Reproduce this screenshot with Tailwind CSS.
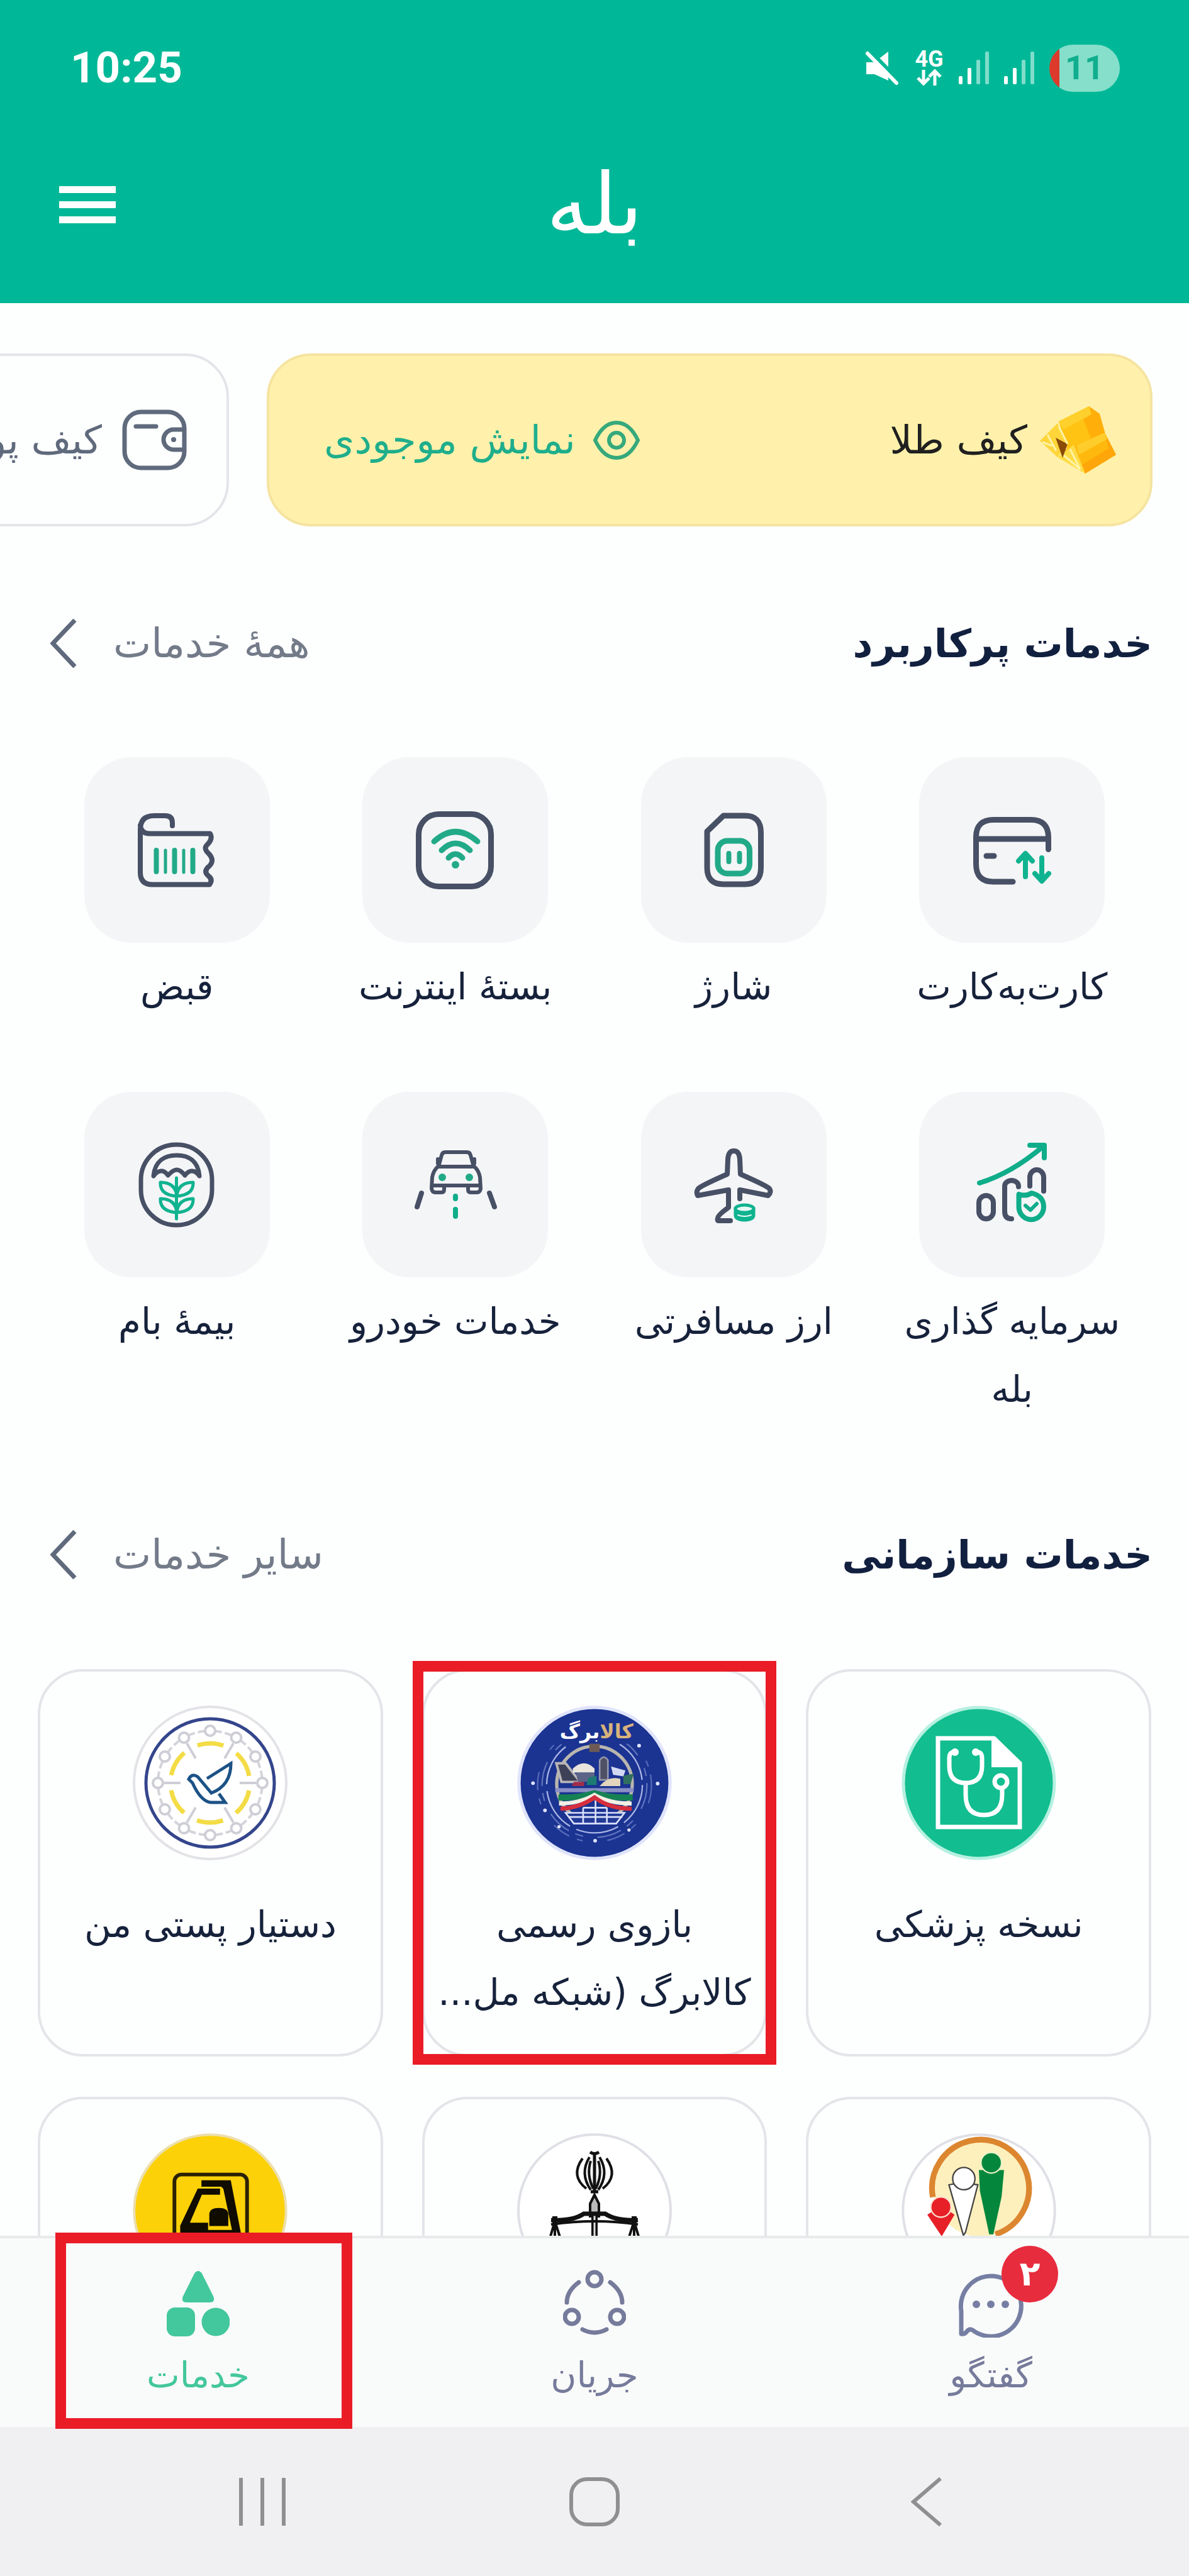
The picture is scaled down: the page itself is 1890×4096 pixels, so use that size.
<!DOCTYPE html>
<html lang="fa" dir="rtl">
<head>
    <meta charset="UTF-8">
    <meta name="viewport" content="width=device-width, initial-scale=1.0">
    <title>بله - خدمات</title>
    <script src="https://cdn.jsdelivr.net/npm/@tailwindcss/browser@4"></script>
</head>
<body class="flex h-screen flex-col overflow-hidden bg-[#fdfefe] font-['DejaVu_Sans',sans-serif] text-[#16223b]">

    <header class="flex h-[482px] shrink-0 flex-col bg-[#00b897] text-white" dir="ltr">
        <!-- status bar -->
        <div class="flex h-[216px] items-center justify-between pl-[112px] pr-[110px]">
            <span class="font-['Roboto',sans-serif] text-[69px] font-bold">10:25</span>
            <div class="flex items-center gap-[24px]">
                <svg class="h-[56px] w-[56px]" viewBox="0 0 56 56" fill="#fff">
                    <path d="M3 19h13L38 2v46L16 38H3z"/>
                    <path d="M9 1l47 48" stroke="#00b897" stroke-width="6"/>
                    <path d="M5 5l46 47" stroke="#fff" stroke-width="6" stroke-linecap="round"/>
                </svg>
                <div class="flex w-[46px] flex-col items-center">
                    <span class="font-['Roboto',sans-serif] text-[36px] font-bold leading-[30px]">4G</span>
                    <svg class="h-[28px] w-[44px]" viewBox="0 0 44 28" fill="none" stroke="#fff" stroke-width="5">
                        <path d="M13 2v22M4 15l9 9 9-9M31 27V4M22 13l9-9 9 9"/>
                    </svg>
                </div>
                <svg class="h-[52px] w-[48px]" viewBox="0 0 48 52" fill="#fff">
                    <rect x="0" y="39" width="6" height="13" rx="2"/><rect x="14" y="26" width="6" height="26" rx="2"/>
                    <rect x="28" y="13" width="6" height="39" rx="2" opacity=".5"/><rect x="42" y="0" width="6" height="52" rx="2" opacity=".5"/>
                </svg>
                <svg class="h-[52px] w-[48px]" viewBox="0 0 48 52" fill="#fff">
                    <rect x="0" y="39" width="6" height="13" rx="2"/><rect x="14" y="26" width="6" height="26" rx="2"/>
                    <rect x="28" y="13" width="6" height="39" rx="2" opacity=".5"/><rect x="42" y="0" width="6" height="52" rx="2" opacity=".5"/>
                </svg>
                <div class="flex h-[75px] w-[112px] items-center justify-center overflow-hidden rounded-full bg-linear-to-r from-[#dc3a2c] from-[16px] to-[#85dfca] to-[16px]">
                    <span class="font-['Roboto',sans-serif] text-[54px] font-bold leading-none text-[#0fae8f]">11</span>
                </div>
            </div>
        </div>
        <!-- app bar -->
        <div class="grid h-[218px] grid-cols-3 items-center px-[94px]">
            <button class="flex w-[90px] flex-col gap-[13px]" aria-label="منو">
                <span class="h-[11px] w-full bg-white"></span>
                <span class="h-[11px] w-full bg-white"></span>
                <span class="h-[11px] w-full bg-white"></span>
            </button>
            <h1 class="text-center text-[134px] font-normal leading-none">بله</h1>
        </div>
    </header>

    <main class="min-h-0 flex-1 overflow-hidden pt-[80px]">

        <!-- wallets -->
        <section class="flex gap-[60px] pr-[58px]">
            <div class="flex h-[275px] w-[1408px] shrink-0 items-center justify-between rounded-[70px] border-4 border-[#f5e4a0] bg-[#fff1ab] pl-[87px] pr-[54px]">
                <div class="flex items-center gap-[20px]">
                    <svg class="h-[108px] w-[121px]" viewBox="0 0 121 108">
                        <path d="M30 24L78 0l25 42-58 32z" fill="#ffc313"/>
                        <path d="M78 0l17 12 9 32-22 10-14-36z" fill="#ffae0a"/>
                        <path d="M30 24L78 0l4 13-45 24z" fill="#ffd02c"/>
                        <path d="M37 70l66-28 18 35-49 30z" fill="#ffb90e"/>
                        <path d="M103 42l18 35-49 30-5-14 42-26z" fill="#ffa60a"/>
                        <path d="M58 62l45-20 4 10-45 25z" fill="#ffcd2b"/>
                        <path d="M0 55l28-28 16 34-16 20z" fill="#ffd53a"/>
                        <path d="M28 81l26-20 18 46z" fill="#ffdb45"/>
                        <path d="M25 50l19 10-8 22z" fill="#8a4a08"/>
                        <path d="M4 57l16 6M12 45l14 26M30 32l14 28M38 78l26 22M48 68l16 32" stroke="#fff3a6" stroke-width="3"/>
                    </svg>
                    <span class="text-[62px] text-[#202020]">کیف طلا</span>
                </div>
                <button class="flex items-center gap-[28px] text-[62px] text-[#1fae8c]">
                    <svg class="h-[62px] w-[74px]" viewBox="0 0 74 62" fill="none" stroke="#35a97c" stroke-width="6">
                        <path d="M3 31C12 12 24 3 37 3s25 9 34 28C62 50 50 59 37 59S12 50 3 31z"/>
                        <circle cx="37" cy="31" r="12"/>
                    </svg>
                    نمایش موجودی
                </button>
            </div>
            <div class="flex h-[275px] w-[1408px] shrink-0 items-center gap-[32px] rounded-[70px] border-4 border-[#e3e5e9] pr-[63px]">
                <svg class="h-[97px] w-[103px] shrink-0" viewBox="0 0 103 97" fill="none" stroke="#5f6a7c" stroke-width="7">
                    <rect x="4" y="4" width="95" height="89" rx="26"/>
                    <path d="M22 27h32" stroke-linecap="round"/>
                    <path d="M99 32H82a16 16 0 0 0 0 32h17"/>
                    <circle cx="82" cy="48" r="4" fill="#5f6a7c" stroke="none"/>
                </svg>
                <span class="text-[62px] text-[#5f6a7c]">کیف پول</span>
            </div>
        </section>

        <!-- frequently used -->
        <section>
            <div class="mt-[132px] flex h-[108px] items-center justify-between pl-[80px] pr-[58px]">
                <h2 class="text-[62px] font-bold text-[#12203f]">خدمات پرکاربرد</h2>
                <a href="#" class="flex items-center gap-[58px] text-[64px] text-[#737b89]">
                    همهٔ خدمات
                    <svg class="h-[78px] w-[42px]" viewBox="0 0 42 78" fill="none" stroke="#5f6a7c" stroke-width="7"><path d="M39 2L4 39l35 37"/></svg>
                </a>
            </div>
            <div class="mt-[127px] grid grid-cols-4 gap-y-[113px] px-[60px] text-center text-[58px] leading-[108px]">
                <a href="#" class="flex flex-col items-center gap-4">
                    <svg class="size-[295px] rounded-[75px] bg-[#f4f5f7]" viewBox="0 0 295 295" fill="none" stroke="#475065" stroke-width="9" stroke-linecap="round" stroke-linejoin="round">
                        <path d="M149 198h-31q-27.500 0-27.500-28v-43q0-27.500 28-27.500h59q28 0 28 28v19M92 130h112"/>
                        <path d="M107 157h12"/>
                        <path d="M169 190v-36m-11 11l11-12 11 12M195 160v36m-11-11l11 12 11-12" stroke="#10b38f" stroke-width="8"/>
                    </svg>
                    کارت‌به‌کارت
                </a>
                <a href="#" class="flex flex-col items-center gap-4">
                    <svg class="size-[295px] rounded-[75px] bg-[#f4f5f7]" viewBox="0 0 295 295" fill="none" stroke="#475065" stroke-width="9" stroke-linecap="round" stroke-linejoin="round">
                        <path d="M131 93h34q25.500 0 25.500 27v56q0 26-25.500 26h-34q-26 0-26-26v-58z"/>
                        <rect x="122" y="133" width="50.500" height="52" rx="15" stroke="#22aa88"/>
                        <path d="M139.500 153v13M156.500 153v13" stroke="#22aa88" stroke-width="8"/>
                    </svg>
                    شارژ
                </a>
                <a href="#" class="flex flex-col items-center gap-4">
                    <svg class="size-[295px] rounded-[75px] bg-[#f4f5f7]" viewBox="0 0 295 295" fill="none" stroke="#475065" stroke-width="9" stroke-linecap="round">
                        <rect x="89.500" y="90.500" width="115" height="115" rx="32"/>
                        <g stroke="#22aa88">
                            <path d="M114 134q34-31 69 0M126 148q22-22 45 0M137 160q11-12 22 0"/>
                            <circle cx="148" cy="171" r="6" fill="#22aa88" stroke="none"/>
                        </g>
                    </svg>
                    بستهٔ اینترنت
                </a>
                <a href="#" class="flex flex-col items-center gap-4">
                    <svg class="size-[295px] rounded-[75px] bg-[#f4f5f7]" viewBox="0 0 295 295" fill="none" stroke="#475065" stroke-width="8" stroke-linecap="round" stroke-linejoin="round">
                        <path d="M140 109v-5q0-11-12-11h-17q-22 0-22 22v68q0 19.500 19 19.500h91q6-8-2-14-7-6-1-13 13-10 2-22-9-8-3-14 10-10 5-18H104q-14 0-15-13"/>
                        <g stroke="#22aa88">
                            <path d="M114.500 148v34M143.500 148v34M172.500 148v34"/>
                            <path d="M129 148v35M158 148v35" stroke-width="5"/>
                        </g>
                    </svg>
                    قبض
                </a>
                <a href="#" class="flex flex-col items-center gap-4">
                    <svg class="size-[295px] rounded-[75px] bg-[#f4f5f7]" viewBox="0 0 295 295" fill="none" stroke="#475065" stroke-width="8" stroke-linecap="round" stroke-linejoin="round">
                        <rect x="95" y="165" width="23" height="37" rx="11.500"/>
                        <path d="M158 151v-1a11 9 0 0 0-22 0v40q0 12 11 12M176 150v-14a11 12 0 0 1 22 0v22"/>
                        <g stroke="#10ad8a">
                            <path d="M96 145q50-15 101-58M176 85h23v20"/>
                            <path d="M158.500 163v20a19.500 20 0 0 0 39.500 0q0-17-19-22-10 6-20.500 2z"/>
                            <path d="M169 181l8 7 10-10" stroke-width="6"/>
                        </g>
                    </svg>
                    <span>سرمایه گذاری<br>بله</span>
                </a>
                <a href="#" class="flex flex-col items-center gap-4">
                    <svg class="size-[295px] rounded-[75px] bg-[#f4f5f7]" viewBox="0 0 295 295" fill="none" stroke="#475065" stroke-width="8" stroke-linecap="round" stroke-linejoin="round">
                        <path d="M157 170v-14l45 9q6-6 2-11-3-4-46-23l-1-24q-1-13-9.500-13t-9.500 13l-1 24q-43 19-46 23-4 5-1 11l49-9v28q-17 12-17 17-1 4 1 4h19"/>
                        <g stroke="#10b38f" stroke-width="5">
                            <path d="M150 185v12q1 7 14.500 7t14.500-7v-12" fill="#10b38f"/>
                            <ellipse cx="164.500" cy="186" rx="14.500" ry="6" fill="#e6faf5"/>
                            <path d="M154 196q10 4 21 0" stroke="#e6faf5" stroke-width="2"/>
                        </g>
                    </svg>
                    ارز مسافرتی
                </a>
                <a href="#" class="flex flex-col items-center gap-4">
                    <svg class="size-[295px] rounded-[75px] bg-[#f4f5f7]" viewBox="0 0 295 295" fill="none" stroke="#475065" stroke-width="6" stroke-linecap="round" stroke-linejoin="round">
                        <path d="M121 119l5-18q1-5 6-5h34q5 0 6 5l5 18M120 119h58q7 6 9 17l1 18q-1 6-6 6h-10q-4 0-4-5v-6h-38v6q0 5-4 5h-10q-5 0-6-6l1-18q2-11 9-17zM112 149h74M120 107v7M178 107v7"/>
                        <path d="M94 161l-7 22M202 161l8 22" stroke-width="8"/>
                        <path d="M148 166v4M148 187v11" stroke="#10ad8a" stroke-width="8"/>
                        <circle cx="127" cy="136" r="6" fill="#22aa88" stroke="none"/><circle cx="170" cy="136" r="6" fill="#22aa88" stroke="none"/>
                    </svg>
                    خدمات خودرو
                </a>
                <a href="#" class="flex flex-col items-center gap-4">
                    <svg class="size-[295px] rounded-[75px] bg-[#f4f5f7]" viewBox="0 0 295 295" fill="none" stroke="#475065" stroke-width="7" stroke-linecap="round" stroke-linejoin="round">
                        <rect x="90" y="84" width="113" height="128" rx="56"/>
                        <path d="M110 134c2-24 18-33 37-33s34 9 36 33q-6-9-13-8-6 1-10 7-7-9-13-9t-14 9q-4-6-9-7-8-1-14 8z"/>
                        <g stroke="#10b38f" stroke-width="5">
                            <path d="M146.500 137v65"/>
                            <path d="M147 166q-27-2-26-22 24 0 26 22zM147 166q27-2 26-22-24 0-26 22zM147 192q-27-2-26-22 24 0 26 22zM147 192q27-2 26-22-24 0-26 22z"/>
                        </g>
                    </svg>
                    بیمهٔ بام
                </a>
            </div>
        </section>

        <!-- organisations -->
        <section>
            <div class="mt-[155px] flex h-[108px] items-center justify-between pl-[80px] pr-[58px]">
                <h2 class="text-[62px] font-bold text-[#12203f]">خدمات سازمانی</h2>
                <a href="#" class="flex items-center gap-[58px] text-[64px] text-[#737b89]">
                    سایر خدمات
                    <svg class="h-[78px] w-[42px]" viewBox="0 0 42 78" fill="none" stroke="#5f6a7c" stroke-width="7"><path d="M39 2L4 39l35 37"/></svg>
                </a>
            </div>
            <div class="mt-[128px] grid grid-cols-3 gap-x-[62px] gap-y-[64px] px-[60px] text-center text-[58px] leading-[108px]">
                <a href="#" class="flex h-[616px] flex-col items-center gap-12 rounded-[72px] border-4 border-[#e3e5e9] pt-[54px]">
                    <svg class="size-[246px]" viewBox="0 0 246 246" fill="none" stroke="#fff" stroke-width="7">
                        <circle cx="123" cy="123" r="120" fill="#12bd90" stroke="#b5f0e0" stroke-width="5"/>
                        <path d="M146 52H58v141h130V92z"/>
                        <path d="M143 49v49h48v-8l-42-41z" fill="#fff" stroke="none"/>
                        <path d="M86 74q-10-2-10 10v12q0 27 26 27t26-27V84q0-12-10-10M102 123v19q0 32 29 32t29-32v-10"/>
                        <circle cx="85" cy="74" r="6" fill="#fff" stroke="none"/><circle cx="118" cy="74" r="6" fill="#fff" stroke="none"/>
                        <circle cx="158" cy="121" r="10"/>
                    </svg>
                    نسخه پزشکی
                </a>
                <a href="#" class="relative flex h-[616px] flex-col items-center gap-12 rounded-[72px] border-4 border-[#e3e5e9] pt-[54px]">
                    <svg class="size-[246px]" viewBox="25 20 750 750" fill="none">
                        <circle cx="400" cy="395" r="366" fill="#1b3391" stroke="#dfe4fb" stroke-width="16"/>
                        <g stroke="#7d8fd2" stroke-width="7">
                            <circle cx="400" cy="405" r="232" stroke="#a9b5e6" stroke-dasharray="210 34"/>
                            <circle cx="400" cy="405" r="254" stroke-dasharray="120 70 40 34" opacity=".7"/>
                            <circle cx="400" cy="405" r="276" stroke-dasharray="90 120 30 40" opacity=".6"/>
                        </g>
                        <path d="M220 90h370v115H220z" fill="#1b3391"/>
                        <circle cx="400" cy="400" r="183" stroke="#b9b6ae" stroke-width="16"/>
                        <path d="M375 205h50v40h-50z" fill="#6d5a55"/>
                        <path d="M215 300h45l70 90h-90z" stroke="#b8b5b8" stroke-width="12" fill="#3d4157"/>
                        <path d="M295 325q55-50 105 0v20H295z" fill="#e9e4dc"/>
                        <path d="M310 345h90v45h-80z" fill="#5c6487"/>
                        <path d="M425 285q20-30 40 0v95h-40z" fill="#4e5066" stroke="#9698ac" stroke-width="8"/>
                        <path d="M425 410q40-50 100-35v35z" fill="#e3d5bd"/>
                        <path d="M480 315l70 20-10 28-50-8z" fill="#d2d8f2"/>
                        <path d="M540 360l50-10-15 50h-35z" fill="#31705e"/>
                        <path d="M300 390h50v20h-60z" fill="#a02f4c"/><path d="M370 370l40-10v45h-50z" fill="#1e7b74"/>
                        <path d="M210 430h380" stroke="#8a90c4" stroke-width="20"/>
                        <path d="M260 540h285l-40 52H300z" fill="#223a97" stroke="#dbe1fa" stroke-width="8"/>
                        <path d="M345 590v-75M405 590V470M460 590v-75M345 515h115M275 560h260" stroke="#dbe1fa" stroke-width="8"/>
                        <path d="M225 465q90 5 175-20 85 25 185 20" stroke="#168253" stroke-width="30"/>
                        <path d="M228 495q100 0 172-42 72 42 180 42" stroke="#f2efe4" stroke-width="20"/>
                        <path d="M235 520q95-5 165-55 72 55 180 55" stroke="#d62e3d" stroke-width="20"/>
                        <g fill="#dfe4fb"><circle cx="102" cy="396" r="9"/><circle cx="706" cy="398" r="9"/><circle cx="160" cy="528" r="9"/><circle cx="228" cy="607" r="8"/><circle cx="403" cy="675" r="9"/><circle cx="567" cy="623" r="8"/><circle cx="616" cy="214" r="9"/></g>
                        <text x="410" y="178" direction="rtl" text-anchor="middle" font-family="DejaVu Sans" font-size="96" font-weight="bold" fill="#fff"><tspan fill="#d8b27c">کالا</tspan>برگ</text>
                    </svg>
                    <span>بازوی رسمی<br>کالابرگ (شبکه مل...</span>
                    <span class="absolute -inset-x-[19px] -inset-y-[17px] border-[17px] border-[#ea1c26]"></span>
                </a>
                <a href="#" class="flex h-[616px] flex-col items-center gap-12 rounded-[72px] border-4 border-[#e3e5e9] pt-[54px]">
                    <svg class="size-[246px]" viewBox="0 0 246 246" fill="none" stroke-width="4">
                        <circle cx="123" cy="123" r="121" fill="#fff" stroke="#e3e3e7"/>
                        <circle cx="123" cy="123" r="102" stroke="#34458c" stroke-width="5"/>
                        <circle cx="123" cy="123" r="83" stroke="#d4d4da" stroke-dasharray="10 5 11 17.460" stroke-dashoffset="-8"/>
                        <g stroke="#cdced6" fill="#fff">
                            <path d="M50 123h26M170 123h26M86 60l14 24M160 60l-14 24M86 186l14-24M160 186l-14-24"/>
                            <circle cx="123" cy="40" r="8"/><circle cx="164.500" cy="51" r="8"/><circle cx="195" cy="81" r="8"/><circle cx="206" cy="123" r="8"/><circle cx="195" cy="165" r="8"/><circle cx="164.500" cy="195" r="8"/><circle cx="123" cy="206" r="8"/><circle cx="81.500" cy="195" r="8"/><circle cx="51" cy="165" r="8"/><circle cx="40" cy="123" r="8"/><circle cx="51" cy="81" r="8"/><circle cx="81.500" cy="51" r="8"/>
                        </g>
                        <circle cx="123" cy="123" r="63" stroke="#f3dc45" stroke-width="7" stroke-dasharray="42 23.970" transform="rotate(11 123 123)"/>
                        <path d="M118 116l38-24q0 35-31 47l-22-26q-9-6-14 4l6 6q13 29 29 31h23l-10-14" stroke="#1c5286" stroke-width="5"/>
                    </svg>
                    دستیار پستی من
                </a>

                <a href="#" class="flex h-[616px] flex-col items-center gap-12 rounded-[72px] border-4 border-[#e3e5e9] pt-[54px]">
                    <svg class="size-[246px]" viewBox="45 50 750 750" fill="none">
                        <circle cx="420" cy="425" r="368" fill="#fff" stroke="#dfe0e6" stroke-width="12"/>
                        <circle cx="430" cy="320" r="232" fill="#fdf0bd"/>
                        <path d="M197 360A235 235 0 1 1 500 540" stroke="#dc8630" stroke-width="28"/>
                        <path d="M420 228h122l-12 130-40 182h-20L425 330z" fill="#04873c"/>
                        <circle cx="480" cy="193" r="50" fill="#04873c" stroke="#eaf2c8" stroke-width="7"/>
                        <path d="M275 300q60-15 140 0l-60 230-10 15z" fill="#fff" stroke="#444" stroke-width="7"/>
                        <circle cx="347" cy="270" r="54" fill="#fff" stroke="#444" stroke-width="7"/>
                        <path d="M170 445l40-25h55l37 25-62 105z" fill="#e71f27"/>
                        <circle cx="236" cy="408" r="49" fill="#e71f27" stroke="#fde0d0" stroke-width="7"/>
                    </svg>
                </a>
                <a href="#" class="flex h-[616px] flex-col items-center gap-12 rounded-[72px] border-4 border-[#e3e5e9] pt-[54px]">
                    <svg class="size-[246px]" viewBox="0 0 246 246" fill="none" stroke="#111" stroke-width="4">
                        <circle cx="123" cy="123" r="121" fill="#fff" stroke="#dfe0e6"/>
                        <path d="M123 34v60M116 30q7 5 14 0M117 93h12" stroke-width="5"/>
                        <path d="M115 38q-16 26 2 52M131 38q16 26-2 52M104 40q-20 28 6 48M142 40q20 28-6 48M117 44q-7 22 4 44M129 44q7 22-4 44"/>
                        <path d="M123 98l-7 14v20h14v-20z" fill="#bbb"/>
                        <path d="M123 130v110" stroke-width="10"/><path d="M123 125v110" stroke="#ddd" stroke-width="3"/>
                        <path d="M54 138q34 2 52-10h34q18 12 52 10" stroke-width="7"/><path d="M54 145q70-10 138 0" stroke-width="4"/>
                        <path d="M60 132v14M186 132v14" stroke-width="8"/>
                        <path d="M60 140l-10 34M60 140l11 34M60 140v34M186 140l-11 34M186 140l10 34M186 140v34"/>
                    </svg>
                </a>
                <a href="#" class="flex h-[616px] flex-col items-center gap-12 rounded-[72px] border-4 border-[#e3e5e9] pt-[54px]">
                    <svg class="size-[246px]" viewBox="45 50 750 750">
                        <circle cx="420" cy="425" r="368" fill="#fcd107" stroke="#ecdfae" stroke-width="12"/>
                        <rect x="247" y="250" width="352" height="360" rx="34" fill="none" stroke="#2b2204" stroke-width="18"/>
                        <path d="M378 278h142l50 260H275v-40l85-180h108v30h-88l-58 136h88v35h116l-42-200-10-10H378z" fill="#110c00"/>
                        <path d="M416 500v-60q4-28 46-28t46 28v60z" fill="#110c00"/>
                    </svg>
                </a>
            </div>
        </section>
    </main>

    <!-- tabs -->
    <nav class="grid h-[304px] shrink-0 grid-cols-3 border-t-4 border-[#e8eaec] bg-[#f9fafa] text-[56px] text-[#767b9b]">
        <a href="#" class="flex flex-col items-center gap-[28px] pt-[48px]">
            <span class="relative">
                <svg class="h-[110px] w-[106px]" viewBox="0 0 106 110" fill="none" stroke="#767fa3" stroke-width="7" stroke-linejoin="round">
                    <path d="M6 104V68A48 48 0 1 1 24 98q-5-3-9 2-3 5-9 4z"/>
                    <g fill="#767fa3" stroke="none"><circle cx="30" cy="57" r="6"/><circle cx="53" cy="57" r="6"/><circle cx="76" cy="57" r="6"/></g>
                </svg>
                <span class="absolute -top-[36px] left-[70px] flex size-[90px] items-center justify-center rounded-full bg-[#e72c3e] text-[54px] font-bold leading-none text-white">۲</span>
            </span>
            <span class="leading-[64px]">گفتگو</span>
        </a>
        <a href="#" class="flex flex-col items-center gap-[28px] pt-[48px]">
            <svg class="h-[110px] w-[100px]" viewBox="0 0 100 110" fill="none" stroke="#767b9b" stroke-width="7" stroke-linecap="round">
                <circle cx="50" cy="17" r="11"/><circle cx="14" cy="77" r="11"/><circle cx="86" cy="77" r="11"/>
                <path d="M25 22Q6 36 6 54M75 22q19 14 19 32M31 97q19 10 38 0"/>
            </svg>
            <span class="leading-[64px]">جریان</span>
        </a>
        <a href="#" class="relative flex flex-col items-center gap-[28px] pt-[48px] text-[#43c79c]">
            <svg class="h-[110px] w-[100px]" viewBox="0 0 100 110" fill="#43c79c">
                <path d="M44 8q6-8 12 0l18 36q4 10-6 10H32q-10 0-6-10z"/>
                <rect x="0" y="62" width="45" height="46" rx="13"/><circle cx="78" cy="85" r="22.500"/>
            </svg>
            <span class="leading-[64px]">خدمات</span>
            <span class="absolute -top-[9px] left-[88px] h-[312px] w-[472px] border-[17px] border-[#ea1c26]"></span>
        </a>
    </nav>

    <!-- system buttons -->
    <div class="grid h-[237px] shrink-0 grid-cols-3 items-center justify-items-center bg-[#f0f0f3] px-[153px]" dir="ltr">
        <button aria-label="برنامه‌ها">
            <svg class="h-[76px] w-[74px]" viewBox="0 0 74 76" stroke="#8f8f91" stroke-width="6"><path d="M3 0v76M37 0v76M71 0v76"/></svg>
        </button>
        <button aria-label="خانه">
            <svg class="h-[78px] w-[80px]" viewBox="0 0 80 78" fill="none" stroke="#8f8f91" stroke-width="6"><rect x="3" y="3" width="74" height="72" rx="25"/></svg>
        </button>
        <button aria-label="بازگشت">
            <svg class="h-[78px] w-[50px]" viewBox="0 0 50 78" fill="none" stroke="#8f8f91" stroke-width="6"><path d="M47 2L4 39l43 37"/></svg>
        </button>
    </div>

</body>
</html>
